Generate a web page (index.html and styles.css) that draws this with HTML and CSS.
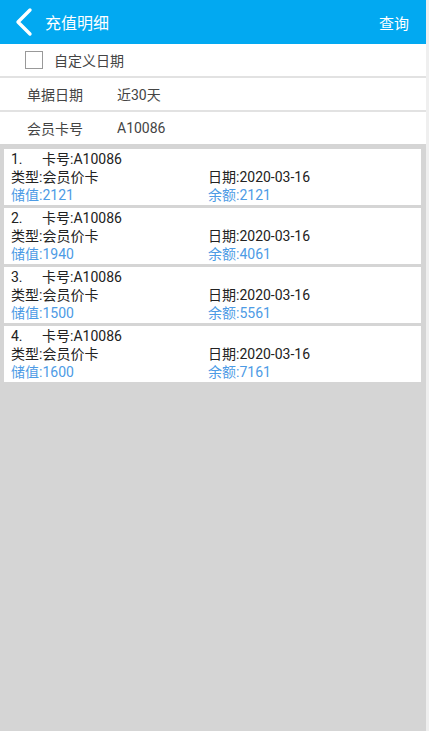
FILE: index.html
```html
<!DOCTYPE html>
<html lang="zh-CN">
<head>
    <meta charset="UTF-8">
    <meta name="viewport" content="width=device-width, initial-scale=1.0">
    <title>充值明细</title>
    <link rel="stylesheet" href="styles.css">
</head>
<body>
<div class="app">
    <header class="top-bar">
        <a class="back" href="#">
            <svg width="20" height="30" viewBox="0 0 20 30">
                <polyline points="15,3 3,15 15,27" fill="none" stroke="#fff" stroke-width="3.4" stroke-linecap="round" stroke-linejoin="round"/>
            </svg>
        </a>
        <span class="title">充值明细</span>
        <a class="query" href="#">查询</a>
    </header>

    <div class="filters">
        <label class="row check-row">
            <span class="checkbox"></span>
            <span>自定义日期</span>
        </label>
        <div class="row">
            <span class="label">单据日期</span>
            <span class="value">近30天</span>
        </div>
        <div class="row">
            <span class="label">会员卡号</span>
            <span class="value">A10086</span>
        </div>
    </div>

    <ul class="records">
        <li class="record">
            <div class="head"><span class="num">1.</span>卡号:A10086</div>
            <div class="cols">
                <span>类型:会员价卡</span><span>日期:2020-03-16</span>
                <span class="blue">储值:2121</span><span class="blue">余额:2121</span>
            </div>
        </li>
        <li class="record">
            <div class="head"><span class="num">2.</span>卡号:A10086</div>
            <div class="cols">
                <span>类型:会员价卡</span><span>日期:2020-03-16</span>
                <span class="blue">储值:1940</span><span class="blue">余额:4061</span>
            </div>
        </li>
        <li class="record">
            <div class="head"><span class="num">3.</span>卡号:A10086</div>
            <div class="cols">
                <span>类型:会员价卡</span><span>日期:2020-03-16</span>
                <span class="blue">储值:1500</span><span class="blue">余额:5561</span>
            </div>
        </li>
        <li class="record">
            <div class="head"><span class="num">4.</span>卡号:A10086</div>
            <div class="cols">
                <span>类型:会员价卡</span><span>日期:2020-03-16</span>
                <span class="blue">储值:1600</span><span class="blue">余额:7161</span>
            </div>
        </li>
    </ul>
</div>
</body>
</html>
```

FILE: styles.css
```css
body {
    margin: 0;
    padding: 0;
    background-color: #efefef;
    font-family: Roboto, "Noto Sans CJK SC", sans-serif;
    font-size: 14px;
    color: #222;
}
.app {
    width: 426px;
    min-height: 731px;
    background-color: #d5d5d5;
}
.top-bar {
    height: 44px;
    background-color: #02a9f1;
    display: flex;
    align-items: center;
    color: #fff;
}
.back {
    display: flex;
    width: 20px;
    margin-left: 15px;
    margin-right: 10px;
}
.title {
    font-size: 16px;
    flex: 1;
}
.query {
    color: #fff;
    text-decoration: none;
    font-size: 15px;
    margin-right: 17px;
}
.filters {
    background-color: #fff;
}
.row {
    height: 32px;
    display: flex;
    align-items: center;
    padding-left: 27px;
    border-bottom: 2px solid #e2e2e2;
    color: #444;
}
.row:last-child {
    border-bottom: none;
}
.check-row {
    padding-left: 25px;
}
.checkbox {
    width: 16px;
    height: 16px;
    border: 1.5px solid #999;
    margin-right: 11px;
}
.label {
    width: 90px;
}
.records {
    list-style-type: none;
    margin: 0;
    padding: 5px 5px 0 4px;
}
.record {
    background-color: #fff;
    height: 56px;
    margin-bottom: 3px;
    padding: 1px 0 0 7px;
    box-sizing: border-box;
    line-height: 18px;
}
.head {
    height: 18px;
}
.num {
    display: inline-block;
    width: 31px;
}
.cols {
    display: grid;
    grid-template-columns: 197px 1fr;
}
.blue {
    color: #4d9be5;
}
```
